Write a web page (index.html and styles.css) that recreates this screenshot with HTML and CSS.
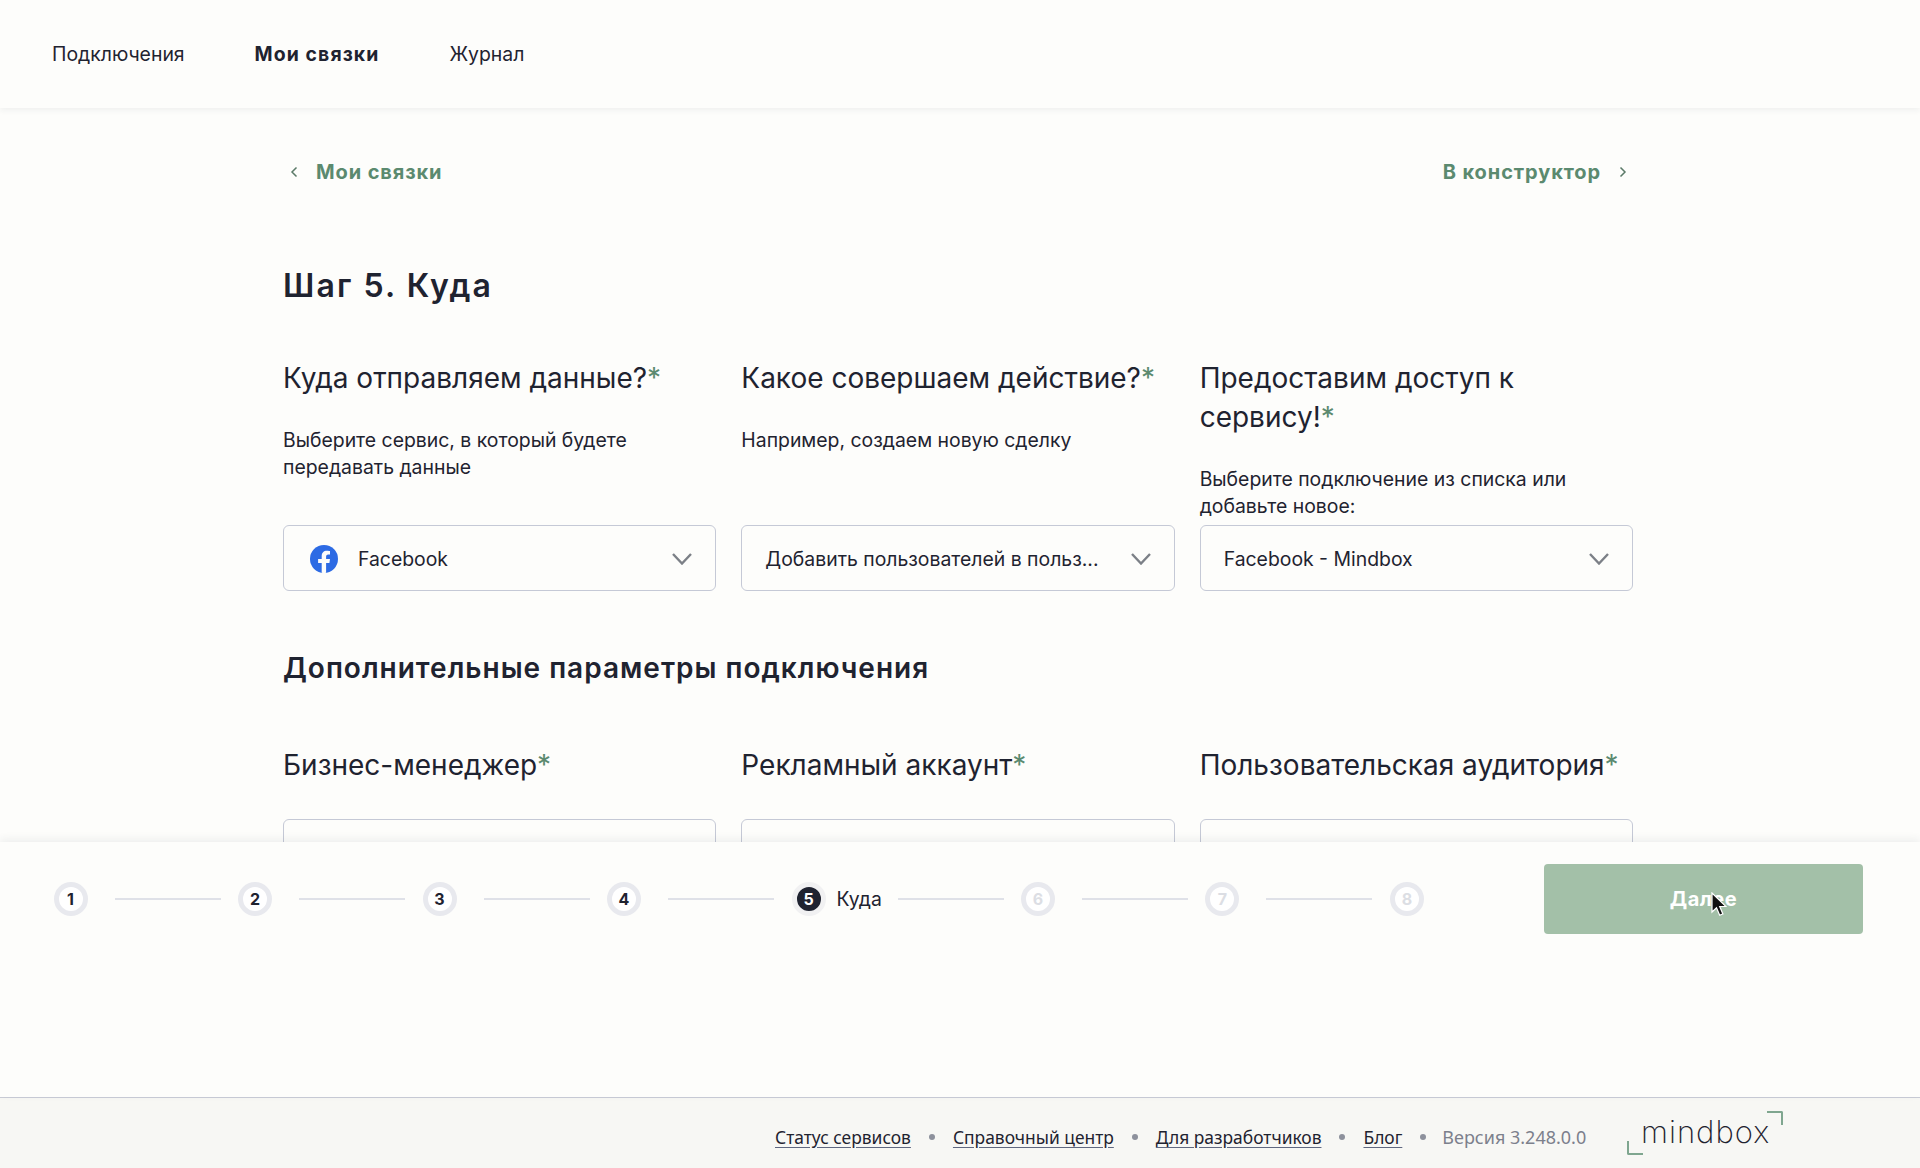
FILE: index.html
```html
<!DOCTYPE html>
<html lang="ru">
<head>
    <meta charset="UTF-8">
    <title>Шаг 5. Куда</title>
    <link rel="stylesheet" href="styles.css">
</head>
<body>
    <header class="top-nav">
        <a class="nav-link" href="#">Подключения</a>
        <a class="nav-link active" href="#">Мои связки</a>
        <a class="nav-link" href="#">Журнал</a>
    </header>

    <main class="content">
        <div class="crumbs">
            <a class="crumb" href="#">
                <svg class="crumb-icon" width="8" height="12" viewBox="0 0 8 12"><path d="M6.500 1.500 2 6l4.500 4.500"/></svg>
                Мои связки
            </a>
            <a class="crumb" href="#">
                В конструктор
                <svg class="crumb-icon" width="8" height="12" viewBox="0 0 8 12"><path d="M1.500 1.500 6 6l-4.500 4.500"/></svg>
            </a>
        </div>

        <h1 class="page-title">Шаг 5. Куда</h1>

        <div class="fields">
            <div class="field">
                <div class="field-title">Куда отправляем данные?<span class="req">*</span></div>
                <div class="field-hint">Выберите сервис, в который будете передавать данные</div>
                <div class="select select-fb">
                    <svg class="fb-icon" width="28" height="28" viewBox="0 0 28 28">
                        <circle cx="14" cy="14" r="14" fill="#2d6be4"/>
                        <path fill="#fdfdfb" d="M19.400 18l.6-4h-3.900v-2.500c0-1.100.5-2.100 2.200-2.100H20V6c0 0-1.600-.3-3.100-.3-3.200 0-5.200 1.900-5.200 5.400V14H8.100v4h3.600v9.800c.7.100 1.500.200 2.200.200s1.500-.100 2.200-.200V18z"/>
                    </svg>
                    <span class="select-value">Facebook</span>
                    <svg class="chevron" width="20" height="12" viewBox="0 0 20 12"><path d="M1 1l9 9.500L19 1"/></svg>
                </div>
            </div>
            <div class="field">
                <div class="field-title">Какое совершаем действие?<span class="req">*</span></div>
                <div class="field-hint">Например, создаем новую сделку</div>
                <div class="select">
                    <span class="select-value">Добавить пользователей в польз...</span>
                    <svg class="chevron" width="20" height="12" viewBox="0 0 20 12"><path d="M1 1l9 9.500L19 1"/></svg>
                </div>
            </div>
            <div class="field">
                <div class="field-title">Предоставим доступ к<br>сервису!<span class="req">*</span></div>
                <div class="field-hint">Выберите подключение из списка или добавьте новое:</div>
                <div class="select">
                    <span class="select-value">Facebook - Mindbox</span>
                    <svg class="chevron" width="20" height="12" viewBox="0 0 20 12"><path d="M1 1l9 9.500L19 1"/></svg>
                </div>
            </div>
        </div>

        <h2 class="section-title">Дополнительные параметры подключения</h2>

        <div class="fields">
            <div class="field">
                <div class="field-title">Бизнес-менеджер<span class="req">*</span></div>
                <div class="select select-low"></div>
            </div>
            <div class="field">
                <div class="field-title">Рекламный аккаунт<span class="req">*</span></div>
                <div class="select select-low"></div>
            </div>
            <div class="field">
                <div class="field-title">Пользовательская аудитория<span class="req">*</span></div>
                <div class="select select-low"></div>
            </div>
        </div>
    </main>

    <section class="wizard">
        <div class="steps">
            <span class="step">1</span><span class="step-line"></span>
            <span class="step">2</span><span class="step-line"></span>
            <span class="step">3</span><span class="step-line"></span>
            <span class="step">4</span><span class="step-line"></span>
            <span class="step current">5</span><span class="step-label">Куда</span><span class="step-line after-label"></span>
            <span class="step todo">6</span><span class="step-line"></span>
            <span class="step todo">7</span><span class="step-line"></span>
            <span class="step todo">8</span>
        </div>
        <button class="next-btn">Далее</button>
        <svg class="cursor" width="16" height="25" viewBox="0 0 16 25">
            <path d="M1 1v19l4.500-4.300 3.200 7.600 3.200-1.400-3.200-7.400H15z" fill="#111" stroke="#fff" stroke-width="1.200"/>
        </svg>
    </section>

    <footer class="page-footer">
        <div class="footer-links">
            <a class="footer-link" href="#">Статус сервисов</a>
            <span class="footer-dot"></span>
            <a class="footer-link" href="#">Справочный центр</a>
            <span class="footer-dot"></span>
            <a class="footer-link" href="#">Для разработчиков</a>
            <span class="footer-dot"></span>
            <a class="footer-link" href="#">Блог</a>
            <span class="footer-dot dot-last"></span>
            <span class="footer-version">Версия 3.248.0.0</span>
        </div>
        <div class="logo">
            <span class="logo-corner corner-bl"></span>
            <span class="logo-text">mindbox</span>
            <span class="logo-corner corner-tr"></span>
        </div>
    </footer>
</body>
</html>
```

FILE: styles.css
```css
:root {
    --page-bg: #fdfdfb;
    --text-color: #1f2330;
    --green: #5b8a6f;
    --border-color: #c5c9d6;
}

* {
    box-sizing: border-box;
}

html, body {
    height: 100%;
}

body {
    margin: 0;
    display: flex;
    flex-direction: column;
    font-family: Inter, "Noto Sans", sans-serif;
    color: var(--text-color);
    background-color: var(--page-bg);
}

a {
    color: inherit;
    text-decoration: none;
}

.top-nav {
    flex: none;
    height: 108px;
    padding-left: 52px;
    display: flex;
    align-items: center;
    gap: 70px;
    font-size: 19.4px;
    box-shadow: 0 2px 6px rgba(40, 50, 70, 0.07);
    position: relative;
    z-index: 1;
}

.nav-link.active {
    font-weight: 700;
    letter-spacing: 1.1px;
}

.content {
    flex: none;
    height: 734px;
    overflow: hidden;
    padding: 52px 287px 0 283px;
}

.crumbs {
    display: flex;
    justify-content: space-between;
    height: 24px;
    padding: 0 6px 0 7px;
}

.crumb {
    display: flex;
    align-items: center;
    gap: 18px;
    font-size: 20px;
    line-height: 24px;
    font-weight: 700;
    letter-spacing: 0.9px;
    color: var(--green);
}

.crumb-icon path {
    fill: none;
    stroke: #5b7a68;
    stroke-width: 1.5;
}

.page-title {
    margin: 82px 0 0;
    font-size: 32px;
    line-height: 40px;
    font-weight: 600;
    letter-spacing: 2.1px;
}

.fields {
    margin-top: 52.500px;
    display: grid;
    grid-template-columns: repeat(3, 1fr);
    gap: 25px;
}

.field {
    display: flex;
    flex-direction: column;
}

.field-title {
    font-size: 28px;
    line-height: 39px;
}

.req {
    color: var(--green);
}

.field-hint {
    margin-top: 29px;
    margin-bottom: 5px;
    font-size: 19.4px;
    line-height: 27px;
}

.select {
    margin-top: auto;
    height: 66px;
    padding: 2px 23px 0;
    display: flex;
    align-items: center;
    justify-content: space-between;
    border: 1px solid var(--border-color);
    border-radius: 6px;
    font-size: 19.4px;
}

.select-fb {
    justify-content: flex-start;
    padding-left: 26px;
}

.select-fb .chevron {
    margin-left: auto;
}

.select-low {
    margin-top: 34px;
}

.fb-icon {
    margin-right: 20px;
}

.chevron {
    margin-top: 1px;
}

.chevron path {
    fill: none;
    stroke: #7c8087;
    stroke-width: 2.400;
}

.section-title {
    margin: 59px 0 0;
    font-size: 28px;
    line-height: 36px;
    font-weight: 600;
    letter-spacing: 1px;
}

.section-title + .fields {
    margin-top: 60px;
}

.wizard {
    flex: 1;
    position: relative;
    padding: 22px 57px 0 53.500px;
    display: flex;
    justify-content: space-between;
    align-items: flex-start;
    background-color: var(--page-bg);
    box-shadow: 0 -3px 8px rgba(40, 50, 70, 0.07);
}

.steps {
    height: 70px;
    display: flex;
    align-items: center;
}

.step {
    flex: none;
    width: 34px;
    height: 34px;
    display: flex;
    align-items: center;
    justify-content: center;
    border: 5px solid #e8e9ee;
    border-radius: 50%;
    background-color: #fff;
    font-size: 16px;
    font-weight: 700;
}

.step.todo {
    color: #dcdee4;
}

.step.current {
    border-color: #f1f1f2;
    background-color: #1f2330;
    color: #fff;
}

.step-line {
    flex: none;
    width: 106px;
    height: 2px;
    margin: 0 17.500px 0 27px;
    background-color: #dfe1e8;
}

.step-line.after-label {
    margin: 0 17px 0 16px;
}

.step-label {
    margin-left: 11px;
    font-size: 19.4px;
}

.next-btn {
    width: 319px;
    height: 70px;
    border: 0;
    border-radius: 4px;
    background-color: #a3c0a8;
    color: #fff;
    font-family: inherit;
    font-size: 20px;
    font-weight: 700;
    letter-spacing: 0.5px;
}

.cursor {
    position: absolute;
    left: 1711px;
    top: 50px;
}

.page-footer {
    flex: none;
    height: 71px;
    padding: 0 137px 0 775px;
    display: flex;
    align-items: center;
    justify-content: space-between;
    border-top: 1px solid #c9ccd6;
    background-color: #f7f7f4;
    font-family: "Noto Sans", sans-serif;
    font-size: 17.400px;
}

.footer-links {
    display: flex;
    align-items: center;
    padding-top: 8px;
}

.footer-link {
    text-decoration: underline;
    text-decoration-color: #5f6780;
    text-underline-offset: 3px;
}

.footer-dot {
    width: 6px;
    height: 6px;
    margin: 0 18px;
    border-radius: 50%;
    background-color: #8d919c;
}

.dot-last {
    margin-right: 16px;
}

.footer-version {
    font-size: 18px;
    color: #7c808c;
}

.logo {
    position: relative;
    width: 156px;
    height: 44px;
}

.logo-text {
    position: absolute;
    left: 14px;
    top: 1px;
    font-family: Inter, sans-serif;
    font-size: 31px;
    line-height: 40px;
    font-weight: 200;
    letter-spacing: 1px;
}

.logo-corner {
    position: absolute;
    width: 16px;
    height: 14px;
    border: 0 solid #7fa68f;
}

.corner-bl {
    left: 0;
    bottom: 0;
    border-width: 0 0 2px 2px;
    border-bottom-left-radius: 2px;
}

.corner-tr {
    right: 0;
    top: 0;
    border-width: 2px 2px 0 0;
    border-top-right-radius: 2px;
}
```
